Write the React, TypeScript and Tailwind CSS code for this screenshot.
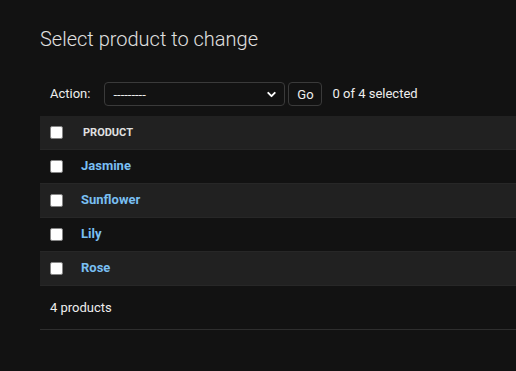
import { ChevronDown } from 'lucide-react'

const products = ['Jasmine', 'Sunflower', 'Lily', 'Rose']

function Box() {
	return (
		<span className="block w-[13px] h-[13px] bg-white border border-[#858585] rounded-[2px]" />
	)
}

export default function App() {
	return (
		<main
			className="min-h-[371px] bg-[#121212] text-[#eeeeee] pl-[40px] pt-[27px] text-[13px]"
			style={{ fontFamily: 'Roboto, "Liberation Sans", sans-serif' }}
		>
			<h1 className="text-[20px] leading-[24px] font-light text-[#e0e0e0] mb-[21px]">
				Select product to change
			</h1>

			<div className="flex items-center h-[44px] px-[10px] gap-[3px]">
				<span className="mr-[11px]">Action:</span>
				<div className="flex items-center justify-between w-[181px] h-[24px] pl-[8px] pr-[6px] border border-[#3a3a3a] rounded-[4px] bg-[#121212]">
					<span className="leading-none">---------</span>
					<ChevronDown size={13} strokeWidth={3.5} className="text-white" />
				</div>
				<button className="h-[24px] w-[34px] border border-[#3a3a3a] rounded-[4px] text-[13px] pt-[2px]">
					Go
				</button>
				<span className="ml-[7px]">0 of 4 selected</span>
			</div>

			<div className="flex items-center h-[34px] bg-[#212121] px-[10px] border-b border-[#272727]">
				<Box />
				<span className="ml-[20px] mt-[2px] text-[11px] font-bold uppercase text-[#e0e0e0]">
					Product
				</span>
			</div>
			{products.map((p, i) => (
				<div
					key={p}
					className={`flex items-center h-[34px] px-[10px] border-b border-[#272727] ${
						i % 2 === 1 ? 'bg-[#212121]' : 'bg-[#121212]'
					}`}
				>
					<Box />
					<a className="ml-[18px] -mt-[2px] font-bold text-[#79bff2]">{p}</a>
				</div>
			))}

			<div className="h-[44px] flex items-center px-[10px] pt-[1px] border-b border-[#2e2e2e]">
				4 products
			</div>
		</main>
	)
}
